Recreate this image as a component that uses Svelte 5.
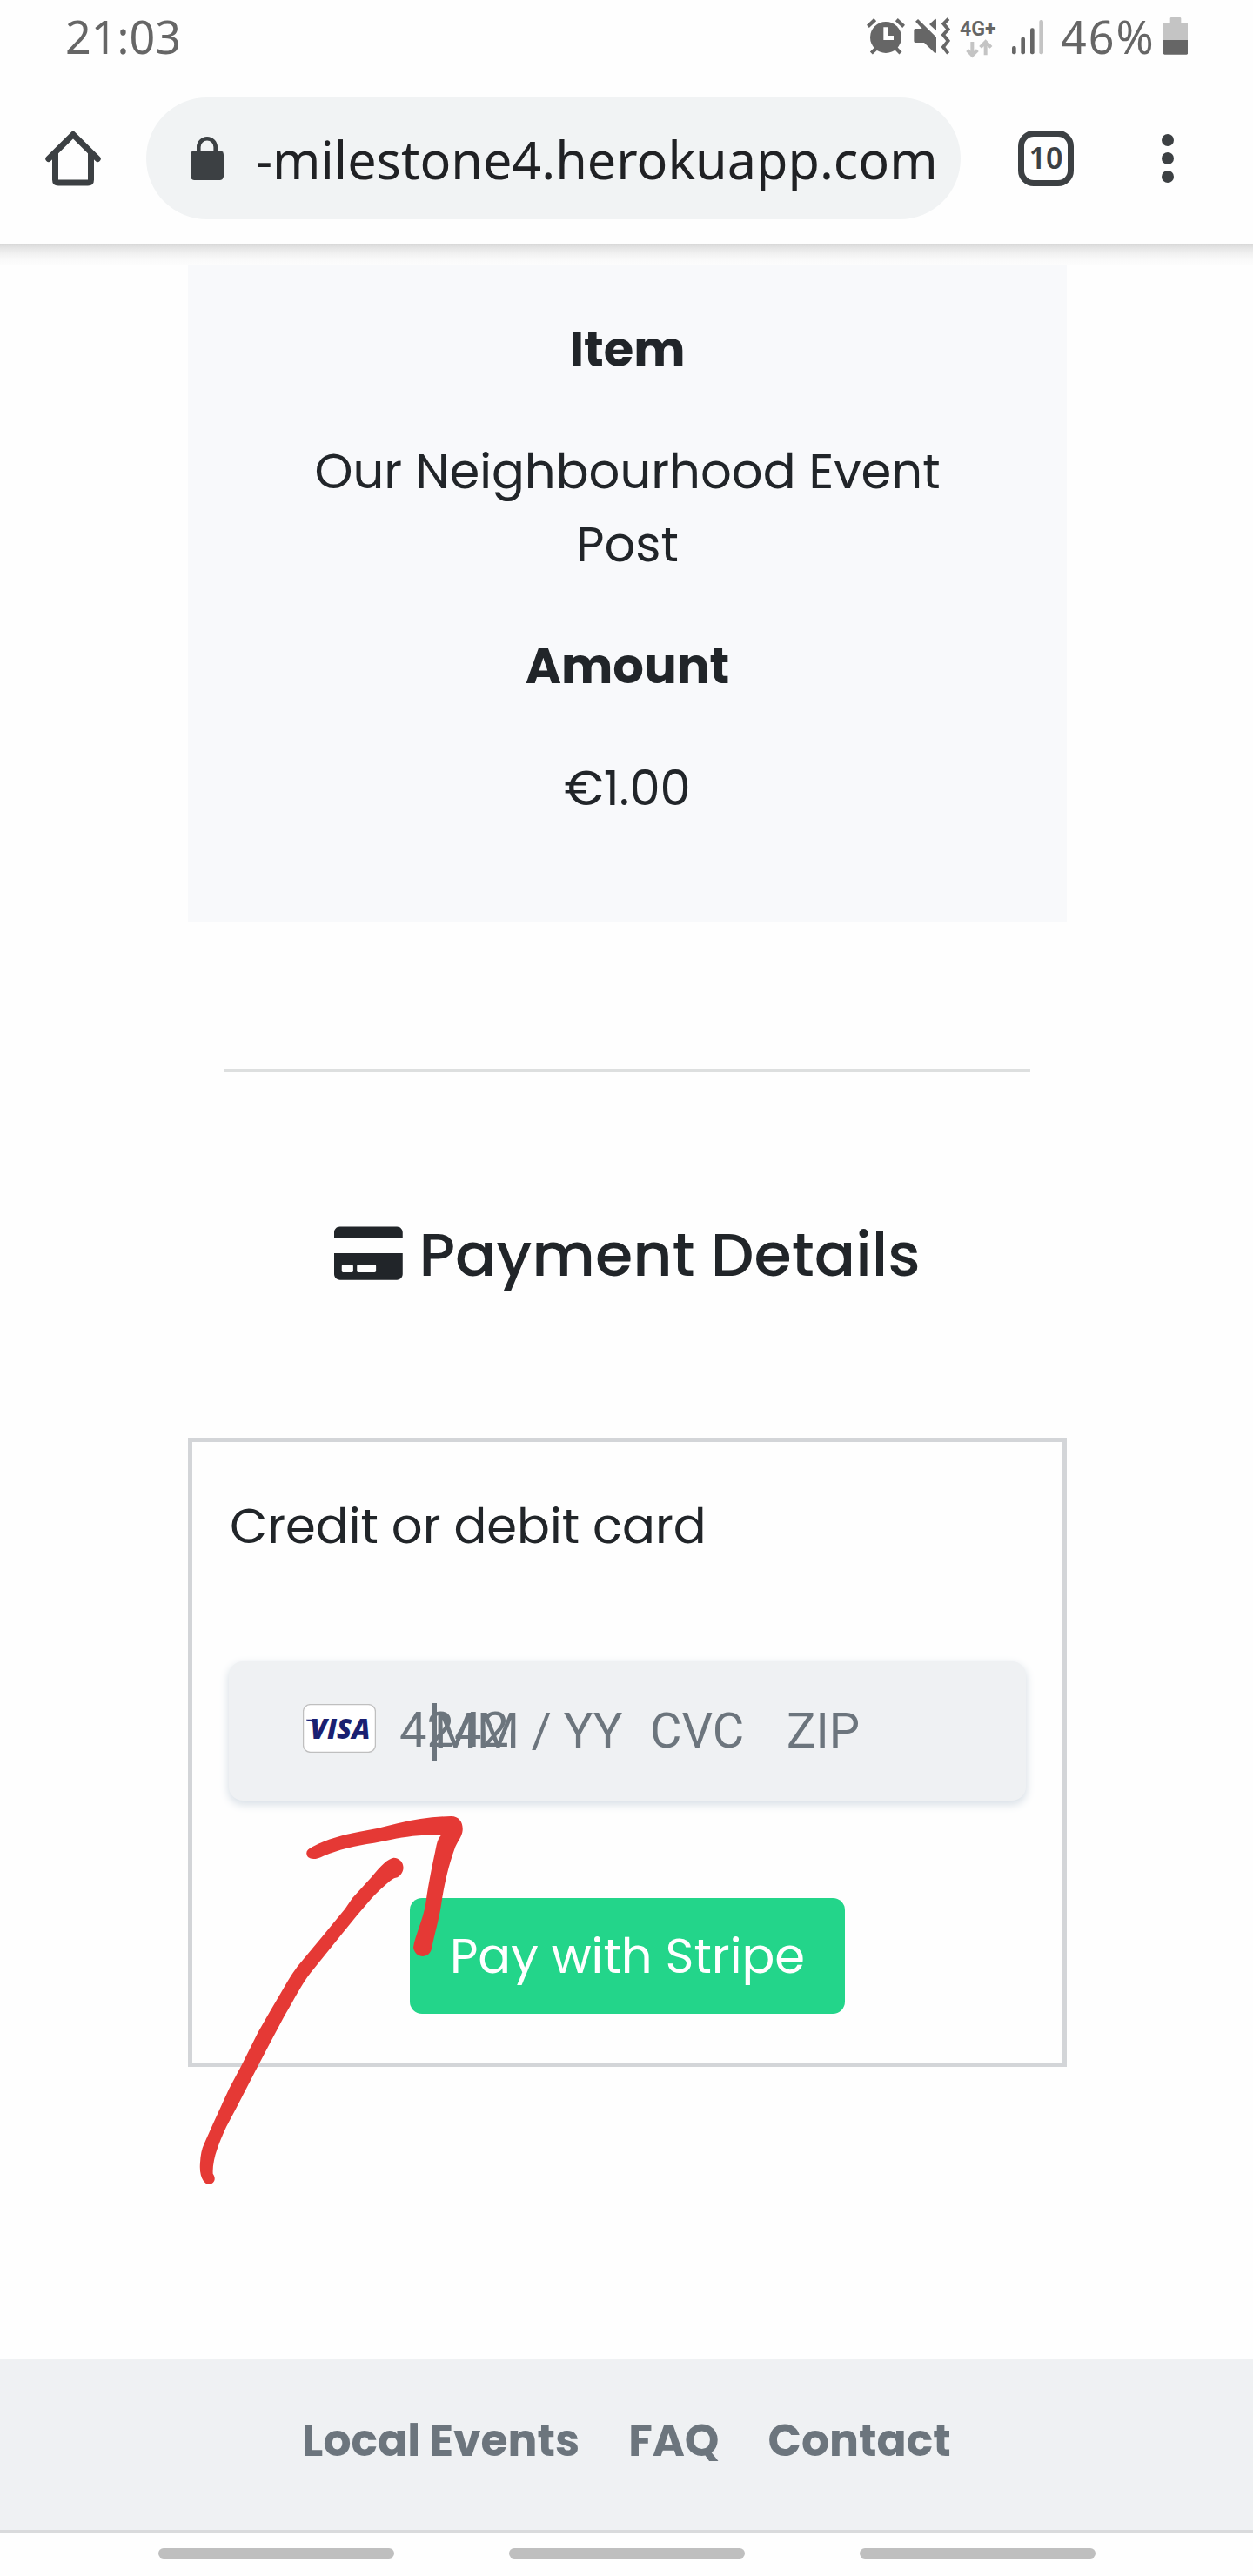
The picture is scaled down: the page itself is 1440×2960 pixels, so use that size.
<script>
  const summary = [
    { label: 'Item', value: 'Our Neighbourhood Event Post' },
    { label: 'Amount', value: '€1.00' }
  ];
  const links = ['Local Events', 'FAQ', 'Contact'];
</script>

<div class="screen">
  <header class="status">
    <span class="time">21:03</span>
    <svg class="alarm" viewBox="111 60 132 130" width="44" height="43.3">
      <circle cx="177" cy="129" r="54" fill="#666" />
      <path d="M115 91 140 68M214 68 239 91M127 183 145 166M211 166 228 183" fill="none" stroke="#666" stroke-width="13" />
      <path d="M169 94h15v29h20v15h-35z" fill="#fff" />
    </svg>
    <svg class="mute" viewBox="272 60 126 130" width="42" height="43.3">
      <path d="M278 74 287 66 350 128V180Q350 184 345 183L308 147H278Q273 147 273 142V104Q273 99 278 99H301Z" fill="#666" />
      <path d="M326 84 343 68Q350 62 350 70V106Z" fill="#666" />
      <path d="M392 65 375 82 391 101 374 120 391 141 374 162 391 184" fill="none" stroke="#666" stroke-width="11.5" />
    </svg>
    <svg class="net" viewBox="431 60 126 138" width="42" height="46">
      <text x="431" y="121" textLength="125" lengthAdjust="spacingAndGlyphs">4G+</text>
      <path d="M474 141V187M457 170 474 188 492 170M520 187V142M502 160 520 141 539 160" fill="none" stroke="#c4c4c4" stroke-width="12" />
    </svg>
    <svg class="bars" viewBox="609 60 108 130" width="36" height="43.3">
      <g fill="#666">
        <rect x="609" y="159" width="14" height="28" rx="6" />
        <rect x="640" y="128" width="14" height="59" rx="6" />
        <rect x="672" y="97" width="14" height="90" rx="6" />
      </g>
      <rect x="703" y="69" width="14" height="118" rx="6" fill="#c4c4c4" />
    </svg>
    <span class="percent">46%</span>
    <svg viewBox="1131 60 84 130" width="28" height="43.3">
      <path d="M1131 138V82Q1131 78 1135 78H1154V64Q1154 60 1158 60H1188Q1192 60 1192 64V78H1211Q1215 78 1215 82V138Z" fill="#c4c4c4" />
      <path d="M1131 138H1215V184Q1215 188 1211 188H1135Q1131 188 1131 184Z" fill="#666" />
    </svg>
  </header>

  <nav class="toolbar">
    <svg viewBox="0 0 64 64" width="64" height="64">
      <path d="M3.8 32.5 32 4.6 60.2 32.5M11.5 26V56.5Q11.5 60 15 60H49Q52.5 60 52.5 56.5V26" fill="none" stroke="#3c4043" stroke-width="7" stroke-linecap="round" />
    </svg>
    <div class="address">
      <svg viewBox="0 0 38 50" width="38" height="50">
        <rect y="16" width="38" height="34" rx="4.5" fill="#3c4043" />
        <path d="M9.3 18V12a9.7 9.7 0 0 1 19.4 0v6" fill="none" stroke="#3c4043" stroke-width="4.6" />
      </svg>
      <span>-milestone4.herokuapp.com</span>
    </div>
    <div class="tabs"><span>10</span></div>
    <svg class="more" viewBox="0 0 14 56" width="14" height="56">
      <g fill="#3c4043"><circle cx="7" cy="7" r="7" /><circle cx="7" cy="28" r="7" /><circle cx="7" cy="49" r="7" /></g>
    </svg>
  </nav>
  <div class="shade"></div>

  <main>
    <section class="summary">
      {#each summary as row}
        <p><strong>{row.label}</strong></p>
        <p>{row.value}</p>
      {/each}
    </section>
    <hr />
    <h2>
      <svg viewBox="0 0 576 512" fill="currentColor">
        <path d="M0 432c0 26.5 21.5 48 48 48h480c26.5 0 48-21.5 48-48V256H0v176zm192-68c0-6.6 5.4-12 12-12h136c6.6 0 12 5.4 12 12v40c0 6.6-5.4 12-12 12H204c-6.6 0-12-5.4-12-12v-40zm-128 0c0-6.6 5.4-12 12-12h72c6.6 0 12 5.4 12 12v40c0 6.6-5.4 12-12 12H76c-6.6 0-12-5.4-12-12v-40zM576 80v48H0V80c0-26.5 21.5-48 48-48h480c26.5 0 48 21.5 48 48z" />
      </svg>
      Payment Details
    </h2>
    <section class="form">
      <div class="label">Credit or debit card</div>
      <div class="card">
        <div class="brand">
          <svg viewBox="0 0 84 56" width="84" height="56">
            <rect x=".6" y=".6" width="82.8" height="54.8" rx="8" fill="#fff" stroke="#bfbfbf" stroke-width="1.3" />
            <path d="M4 17.8H14L17 25Q12 20 4 18.6Z" fill="#1a1f71" />
            <text x="8.5" y="39.5" textLength="69" lengthAdjust="spacingAndGlyphs">VISA</text>
          </svg>
        </div>
        <span class="number">4242<i class="caret"></i></span>
        <span class="expiry">MM / YY</span>
        <span class="cvc">CVC</span>
        <span>ZIP</span>
      </div>
      <button>Pay with Stripe</button>
    </section>
  </main>

  <footer>
    {#each links as link}<a href="#top">{link}</a>{/each}
  </footer>
  <div class="gestures"><i></i><i></i><i></i></div>

  <svg class="arrow" viewBox="0 0 1260 1380" width="420" height="460" fill="#e53935">
    <path d="M478 156C530 128 580 116 640 104L700 93 770 76Q860 53 955 51C985 51 997 75 995 100C993 120 980 135 970 156C945 225 936 270 925 330C916 400 902 440 888 508C880 543 832 543 825 503C830 465 858 410 868 350C879 270 893 210 905 150Q910 127 922 115C850 114 800 122 750 131L690 143C620 153 570 165 515 188Q480 206 462 192Q446 170 478 156Z" />
    <path d="M757 194C792 195 805 240 770 262C755 263 735 280 680 335L630 394 580 455 470 592C440 630 410 690 380 740L335 825 280 930 215 1056 180 1122Q158 1170 150 1195Q132 1245 134 1283C148 1302 136 1320 120 1320C108 1320 85 1300 90 1245Q92 1205 104 1180L135 1110 190 990 235 905 290 795 330 725 380 640C395 613 415 582 430 563L510 467 590 370 615 333 680 262Q730 198 757 194Z" />
  </svg>
</div>

<style>
  :global(body) { margin: 0; background: #fefefe; }
  .screen { position: relative; width: 1440px; height: 2960px; overflow: hidden; background: #fefefe; display: flex; flex-direction: column; color: #212529; font: 56px/84px Poppins, Inter, sans-serif; }
  svg { display: block; flex: none; }

  .status { box-sizing: border-box; height: 84px; flex: none; display: flex; align-items: center; padding: 0 75px; font: 52px/72px 'Noto Sans', sans-serif; color: #666; }
  .time { width: 922px; }
  .mute { margin-left: 10px; }
  .net { margin: 3px 0 0 11px; }
  .net text { font: 700 69px Roboto, sans-serif; fill: #666; }
  .bars { margin-left: 18px; }
  .percent { margin-left: 20px; width: 118px; letter-spacing: 2px; white-space: nowrap; }

  .toolbar { height: 196px; flex: none; display: flex; align-items: center; padding-left: 52px; }
  .address { box-sizing: border-box; width: 936px; height: 140px; margin-left: 52px; padding-left: 51px; border-radius: 70px; background: #f1f3f4; display: flex; align-items: center; color: #202124; font: 59.3px/82px 'Noto Sans', sans-serif; white-space: nowrap; }
  .address span { margin: 2px 0 0 37px; }
  .tabs { box-sizing: border-box; width: 64px; height: 64px; margin-left: 66px; border: 7px solid #3c4043; border-radius: 18px; display: flex; align-items: center; justify-content: center; color: #3c4043; font: 600 34px/46px 'Noto Sans', sans-serif; }
  .tabs span { margin-top: -2px; }
  .more { margin-left: 101px; }
  .shade { height: 24px; flex: none; background: linear-gradient(#d8d8d8, #e6e6e6 22%, #f2f2f2 50%, #fafafa 80%, #fcfcfc); }

  main { width: 1010px; margin-left: 216px; display: flex; flex-direction: column; }
  .summary { padding: 56px 112px 56px; background: #f8f9fb; text-align: center; }
  .summary p { margin: 0 0 56px; }
  strong { font-weight: 700; }
  hr { width: 926px; height: 4px; margin: 168px 42px; border: 0; background: #dddfdf; }
  h2 { margin: 0; font-size: 70px; line-height: 84px; font-weight: 500; text-align: center; }
  h2 svg { display: inline-block; width: 78.75px; height: 70px; vertical-align: -.125em; }
  .form { box-sizing: border-box; height: 723px; margin-top: 168px; border: 5px solid #d3d5d8; padding: 55px 42px 0; display: flex; flex-direction: column; }
  .label { padding-left: 1px; }
  .card { box-sizing: border-box; height: 160px; margin-top: 113px; padding-left: 85px; border-radius: 16px; background: #eff1f3; box-shadow: 0 4px 11px #d3dbe3; display: flex; align-items: center; color: #6c757d; font: 56px/66px Roboto, sans-serif; white-space: nowrap; }
  .brand { width: 84px; margin: -6px 27px 0 0; }
  .brand text { font: italic 800 31px 'Open Sans', sans-serif; fill: #1a1f71; }
  .number { position: relative; width: 40px; margin-top: -2px; }
  .caret { position: absolute; left: 38px; top: 2px; width: 4.5px; height: 66px; background: #6c757d; }
  .expiry { width: 248px; }
  .cvc { width: 157px; }
  button { align-self: center; width: 500px; height: 133px; margin-top: 112px; padding: 0; border: 0; border-radius: 14px; background: #23d58a; color: #fff; font: inherit; }

  footer { box-sizing: border-box; height: 200px; flex: none; margin-top: 336px; padding-top: 56px; border-bottom: 4px solid #d9dadc; background: #eff1f3; display: flex; justify-content: center; gap: 56px; font-size: 50.4px; line-height: 75.6px; font-weight: 700; }
  footer a { color: #6c757d; text-decoration: none; }
  .gestures { display: flex; justify-content: center; gap: 132px; padding-top: 17px; }
  .gestures i { width: 271px; height: 12px; border-radius: 6px; background: #bfbfbf; }
  .arrow { position: absolute; left: 200px; top: 2070px; }
</style>
